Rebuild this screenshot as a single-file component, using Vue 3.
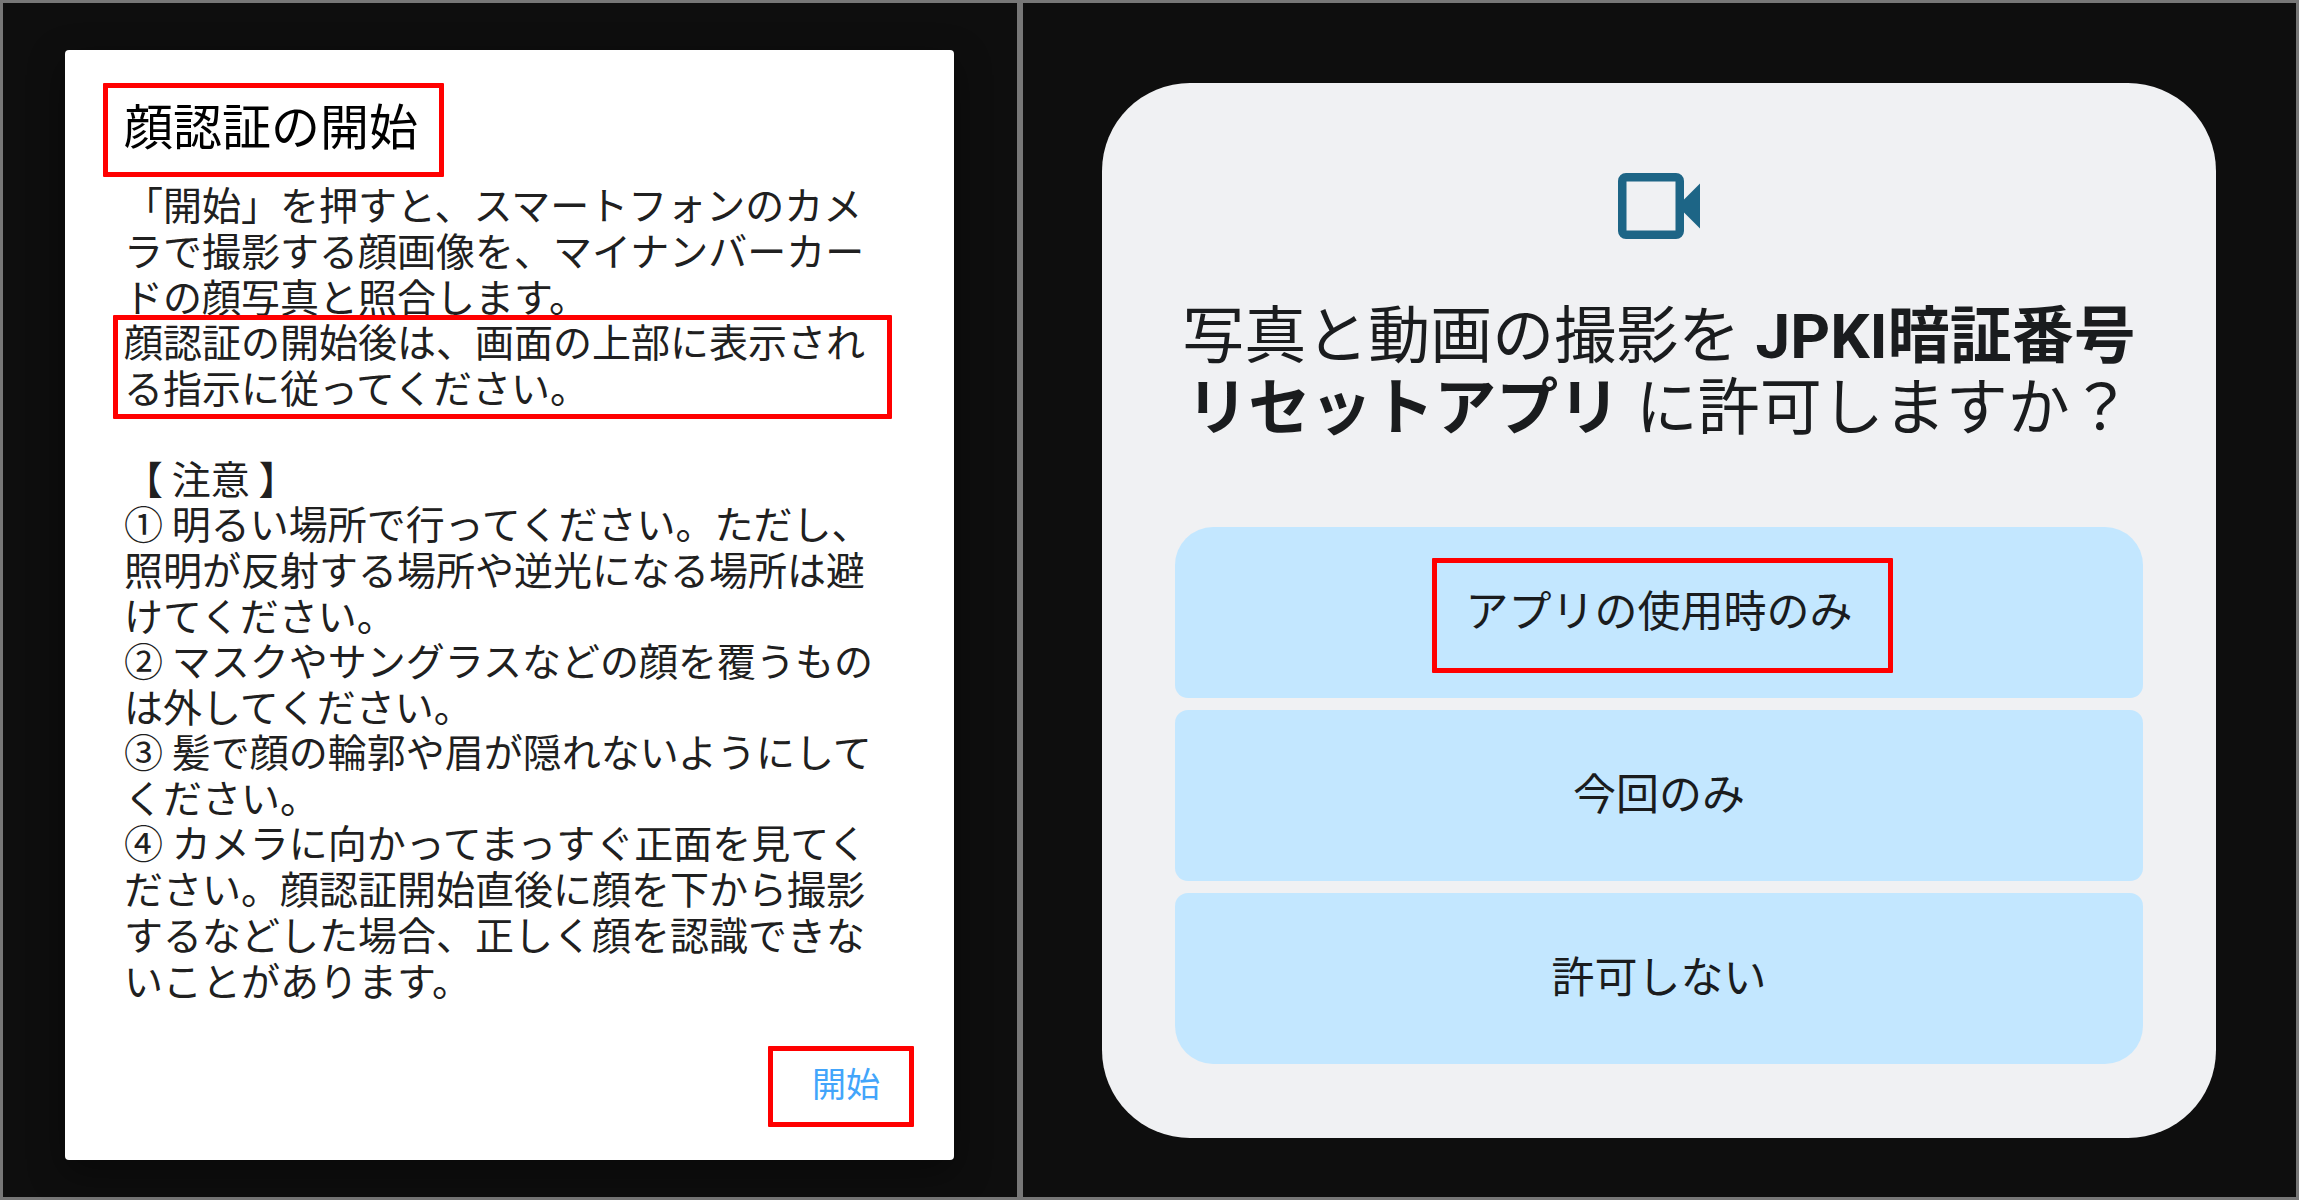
<script setup>
const intro = [
  { text: '「開始」を押すと、スマートフォンのカメラで撮影する顔画像を、マイナンバーカードの顔写真と照合します。', marked: false },
  { text: '顔認証の開始後は、画面の上部に表示される指示に従ってください。', marked: true },
]

const notes = [
  '① 明るい場所で行ってください。ただし、照明が反射する場所や逆光になる場所は避けてください。',
  '② マスクやサングラスなどの顔を覆うものは外してください。',
  '③ 髪で顔の輪郭や眉が隠れないようにしてください。',
  '④ カメラに向かってまっすぐ正面を見てください。顔認証開始直後に顔を下から撮影するなどした場合、正しく顔を認識できないことがあります。',
]

const choices = [
  { label: 'アプリの使用時のみ', marked: true },
  { label: '今回のみ', marked: false },
  { label: '許可しない', marked: false },
]
</script>

<template>
  <main class="screens">
    <section class="screen screen-start">
      <div class="dialog" role="dialog" aria-labelledby="start-title">
        <h1 id="start-title" class="dialog-title">
          顔認証の開始<span class="mark mark-title"></span>
        </h1>
        <div class="dialog-body">
          <p v-for="item in intro" :key="item.text" class="block">
            {{ item.text }}<span v-if="item.marked" class="mark mark-text"></span>
          </p>
          <h2 class="block notes-title">【 注意 】</h2>
          <ul class="notes">
            <li v-for="note in notes" :key="note" class="block">{{ note }}</li>
          </ul>
        </div>
        <button type="button" class="start">開始</button>
      </div>
    </section>

    <section class="screen screen-permission">
      <div class="card" role="dialog" aria-labelledby="permission-title">
        <svg class="camera" viewBox="0 0 82 66" aria-hidden="true">
          <path
            fill-rule="evenodd"
            d="M8 0H58a8 8 0 0 1 8 8V26.500L82 10.500V55.500L66 39.500V58a8 8 0 0 1-8 8H8a8 8 0 0 1-8-8V8a8 8 0 0 1 8-8ZM8.500 8.500V57.500H57.500V8.500Z"
          />
        </svg>
        <h1 id="permission-title" class="card-title">
          写真と動画の撮影を <strong>JPKI暗証番号リセットアプリ</strong> に許可しますか？
        </h1>
        <div class="choices">
          <button v-for="choice in choices" :key="choice.label" type="button" class="choice">
            <span class="choice-label">
              {{ choice.label }}<span v-if="choice.marked" class="mark mark-choice"></span>
            </span>
          </button>
        </div>
      </div>
    </section>
  </main>
</template>

<style>
body {
  margin: 0;
  background: #777;
}
</style>

<style scoped>
.screens {
  box-sizing: border-box;
  min-height: 100vh;
  display: grid;
  grid-template-columns: 1014fr 1273fr;
  gap: 6px;
  padding: 3px;
  background: #777;
  font-family: "Noto Sans CJK JP", sans-serif;
}

.screen {
  min-width: 0;
  background: #0e0e0e;
}

.screen-start {
  padding: 47px 63px 37px 62px;
}

.screen-permission {
  padding: 80px 80px 59px 79px;
}

h1,
h2,
p,
ul {
  margin: 0;
  padding: 0;
  font-weight: 400;
}

.mark {
  position: absolute;
  border: 5px solid #f00;
  border-radius: 1px;
  pointer-events: none;
}

.dialog {
  display: flex;
  flex-direction: column;
  align-items: flex-start;
  padding: 44px 60px 33px 59px;
  border-radius: 4px;
  background: #fff;
  box-shadow: 0 12px 36px rgba(0, 0, 0, 0.4);
}

.dialog-title {
  position: relative;
  font-size: 49px;
  line-height: 60px;
  color: #000;
}

.mark-title {
  inset: -11px -26px -23px -21px;
}

.dialog-body {
  align-self: stretch;
  margin-top: 26px;
  font-size: 39px;
  line-height: 46px;
  color: #202020;
}

.block {
  position: relative;
  margin-bottom: -1px;
  font-size: 39px;
}

.mark-text {
  inset: -2px 2px -10px -11px;
}

.notes-title {
  padding-top: 46px;
}

.notes {
  list-style: none;
}

.start {
  align-self: flex-end;
  margin: 45px -20px 0 0;
  padding: 9px 29px 16px 39px;
  border: 5px solid #f00;
  border-radius: 1px;
  background: none;
  font: inherit;
  font-size: 34px;
  line-height: 46px;
  color: #42a5fb;
}

.card {
  display: flex;
  flex-direction: column;
  align-items: center;
  padding: 90px 73px 74px;
  border-radius: 88px;
  background: #f0f1f3;
  color: #1a1c1e;
}

.camera {
  width: 82px;
  height: 66px;
  fill: #1d6586;
}

.card-title {
  margin-top: 62px;
  font-family: Roboto, "Noto Sans CJK JP", sans-serif;
  font-size: 62px;
  line-height: 72px;
  text-align: center;
}

.card-title strong {
  font-weight: 700;
}

.choices {
  align-self: stretch;
  display: flex;
  flex-direction: column;
  gap: 12px;
  margin-top: 82px;
}

.choice {
  padding: 51px 20px 60px;
  border: 0;
  border-radius: 13px;
  background: #c3e7ff;
  font: inherit;
  font-size: 43px;
  line-height: 60px;
  color: #1a1c1e;
}

.choice:first-child {
  border-top-left-radius: 38px;
  border-top-right-radius: 38px;
}

.choice:last-child {
  border-bottom-left-radius: 38px;
  border-bottom-right-radius: 38px;
}

.choice-label {
  position: relative;
  display: inline-block;
}

.mark-choice {
  inset: -20px -40px -35px -34px;
}
</style>
